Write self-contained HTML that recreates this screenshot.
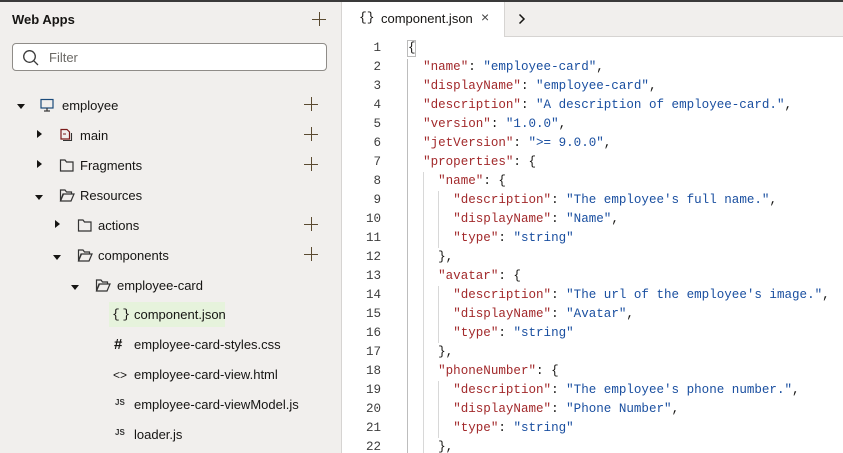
<!DOCTYPE html>
<html><head><style>
*{margin:0;padding:0;box-sizing:border-box}
body{width:843px;height:453px;overflow:hidden;background:#fff;font-family:"Liberation Sans",sans-serif;position:relative}
.topline{position:absolute;left:0;top:0;width:843px;height:2px;background:#3a3a3a}
.side{position:absolute;left:0;top:2px;width:342px;height:451px;background:#f1efed;border-right:1px solid #d6d4d2}
.title{position:absolute;left:12px;top:10px;font-weight:bold;font-size:13px;color:#161513}
.plus{position:absolute;width:14px;height:14px}
.plus:before{content:"";position:absolute;left:6.5px;top:0;width:1px;height:14px;background:#5a4a30}
.plus:after{content:"";position:absolute;left:0;top:6.5px;width:14px;height:1px;background:#5a4a30}
.filter{position:absolute;left:12px;top:41px;width:315px;height:28px;border:1px solid #8f8c88;border-radius:4px;background:#fff}
.filter span{position:absolute;left:36px;top:6px;font-size:13px;color:#6b6965}
.row{position:absolute;font-size:13px;color:#161513;height:20px;line-height:20px}
.caret{position:absolute;width:0;height:0}
.cd{border-left:4px solid transparent;border-right:4px solid transparent;border-top:5px solid #161513}
.cr{border-top:4px solid transparent;border-bottom:4px solid transparent;border-left:5px solid #161513}
.ic{position:absolute}
.tabbar{position:absolute;left:343px;top:2px;width:500px;height:35px;background:#f1efed;border-bottom:1px solid #d6d4d2}
.tab{position:absolute;left:0;top:0;width:162px;height:35px;background:#fff;border-right:1px solid #d6d4d2}
.code{position:absolute;left:343px;top:38px;width:500px;height:415px;background:#fff;overflow:hidden}
pre{font-family:"Liberation Mono",monospace;font-size:12.55px;line-height:19px;position:absolute;top:1px}
.ln{right:462px;text-align:right;color:#3d3d3d;left:0;width:38px}
.src{left:65px;color:#161513}
.k{color:#a2292b}.v{color:#1a4fa0}
.g{position:absolute;width:1px;background:#d8d8d8}
</style></head><body>
<div class="topline"></div>
<div class="side">
<div class="title" style="top:10px">Web Apps</div>
<div class="plus" style="left:312px;top:10px"></div>
<div class="filter"><svg style="position:absolute;left:9px;top:5px" width="18" height="18" viewBox="0 0 18 18"><circle cx="7.5" cy="7.5" r="5.8" fill="none" stroke="#3a3a3a" stroke-width="1.3"/><line x1="11.8" y1="11.8" x2="16" y2="16" stroke="#3a3a3a" stroke-width="1.3"/></svg><span>Filter</span></div>

<div class="caret cd" style="left:17px;top:102px"></div>
<svg class="ic" style="left:40px;top:96px" width="15" height="15" viewBox="0 0 15 15"><rect x="1" y="1.5" width="12" height="8.5" fill="none" stroke="#1b4a7a" stroke-width="1.2"/><line x1="7" y1="10" x2="7" y2="13" stroke="#333" stroke-width="1.2"/><line x1="4" y1="13" x2="10" y2="13" stroke="#333" stroke-width="1.2"/></svg>
<div class="row" style="left:62px;top:94px">employee</div>
<div class="plus" style="left:304px;top:95px"></div>

<div class="caret cr" style="left:37px;top:128px"></div>
<svg class="ic" style="left:59px;top:126px" width="15" height="15" viewBox="0 0 15 15"><path d="M2 1.5h6l2.5 2.5v7H2z" fill="none" stroke="#7a1a1a" stroke-width="1.2"/><path d="M4 12.5h8.5V5" fill="none" stroke="#333" stroke-width="1.1"/><line x1="4" y1="6" x2="7" y2="6" stroke="#7a1a1a"/></svg>
<div class="row" style="left:80px;top:124px">main</div>
<div class="plus" style="left:304px;top:125px"></div>

<div class="caret cr" style="left:37px;top:158px"></div>
<svg class="ic" style="left:59px;top:156px" width="16" height="15" viewBox="0 0 16 15"><path d="M1.5 2h4.5l1.5 2h6.5v9h-12.5z" fill="none" stroke="#333" stroke-width="1.2"/></svg>
<div class="row" style="left:80px;top:154px">Fragments</div>
<div class="plus" style="left:304px;top:155px"></div>

<div class="caret cd" style="left:35px;top:193px"></div>
<svg class="ic" style="left:59px;top:186px" width="16" height="15" viewBox="0 0 16 15"><path d="M1.5 2h4.5l1.5 2h5v2h-8l-3 7z M1.5 13l2.5-7h11l-3 7z" fill="none" stroke="#333" stroke-width="1.2"/></svg>
<div class="row" style="left:80px;top:184px">Resources</div>

<div class="caret cr" style="left:55px;top:218px"></div>
<svg class="ic" style="left:77px;top:216px" width="16" height="15" viewBox="0 0 16 15"><path d="M1.5 2h4.5l1.5 2h6.5v9h-12.5z" fill="none" stroke="#333" stroke-width="1.2"/></svg>
<div class="row" style="left:98px;top:214px">actions</div>
<div class="plus" style="left:304px;top:215px"></div>

<div class="caret cd" style="left:53px;top:253px"></div>
<svg class="ic" style="left:77px;top:246px" width="16" height="15" viewBox="0 0 16 15"><path d="M1.5 2h4.5l1.5 2h5v2h-8l-3 7z M1.5 13l2.5-7h11l-3 7z" fill="none" stroke="#333" stroke-width="1.2"/></svg>
<div class="row" style="left:98px;top:244px">components</div>
<div class="plus" style="left:304px;top:245px"></div>

<div class="caret cd" style="left:71px;top:283px"></div>
<svg class="ic" style="left:95px;top:276px" width="16" height="15" viewBox="0 0 16 15"><path d="M1.5 2h4.5l1.5 2h5v2h-8l-3 7z M1.5 13l2.5-7h11l-3 7z" fill="none" stroke="#333" stroke-width="1.2"/></svg>
<div class="row" style="left:117px;top:274px">employee-card</div>

<div style="position:absolute;left:109px;top:300px;width:116px;height:25px;background:#e6f3dc"></div>
<div class="row" style="left:112px;top:303px;font-family:'Liberation Mono',monospace;font-size:13px">{&#8201;}</div>
<div class="row" style="left:134px;top:303px">component.json</div>
<div class="row" style="left:114px;top:333px;font-size:15px;font-weight:bold">#</div>
<div class="row" style="left:134px;top:333px">employee-card-styles.css</div>
<div class="row" style="left:113px;top:363px;font-size:12px">&lt;&gt;</div>
<div class="row" style="left:134px;top:363px">employee-card-view.html</div>
<div class="row" style="left:115px;top:391px;font-size:8px;font-weight:bold;color:#333">JS</div>
<div class="row" style="left:134px;top:393px">employee-card-viewModel.js</div>
<div class="row" style="left:115px;top:421px;font-size:8px;font-weight:bold;color:#333">JS</div>
<div class="row" style="left:134px;top:423px">loader.js</div>
</div>

<div class="tabbar"><div class="tab">
<span style="position:absolute;left:16px;top:8px;font-family:'Liberation Mono',monospace;font-size:13px;color:#161513">{}</span>
<span style="position:absolute;left:38px;top:9px;font-size:13px;color:#161513">component.json</span>
<span style="position:absolute;left:138px;top:7px;font-size:14px;color:#444">×</span>
</div>
<svg style="position:absolute;left:174px;top:11px" width="10" height="12" viewBox="0 0 10 12"><path d="M2.5 1.5l4.5 4.5-4.5 4.5" fill="none" stroke="#161513" stroke-width="1.5"/></svg>
</div>

<div class="code">
<div class="g" style="left:64px;top:21px;height:400px;background:#bdbdbd"></div>
<div class="g" style="left:80px;top:134px;height:290px"></div>
<div class="g" style="left:95px;top:153px;height:57px"></div>
<div class="g" style="left:95px;top:248px;height:57px"></div>
<div class="g" style="left:95px;top:343px;height:57px"></div>
<div style="position:absolute;left:64px;top:2px;width:9px;height:17px;border:1px solid #bbb"></div>
<pre class="ln">1
2
3
4
5
6
7
8
9
10
11
12
13
14
15
16
17
18
19
20
21
22</pre>
<pre class="src">{
  <span class="k">"name"</span>: <span class="v">"employee-card"</span>,
  <span class="k">"displayName"</span>: <span class="v">"employee-card"</span>,
  <span class="k">"description"</span>: <span class="v">"A description of employee-card."</span>,
  <span class="k">"version"</span>: <span class="v">"1.0.0"</span>,
  <span class="k">"jetVersion"</span>: <span class="v">"&gt;= 9.0.0"</span>,
  <span class="k">"properties"</span>: {
    <span class="k">"name"</span>: {
      <span class="k">"description"</span>: <span class="v">"The employee's full name."</span>,
      <span class="k">"displayName"</span>: <span class="v">"Name"</span>,
      <span class="k">"type"</span>: <span class="v">"string"</span>
    },
    <span class="k">"avatar"</span>: {
      <span class="k">"description"</span>: <span class="v">"The url of the employee's image."</span>,
      <span class="k">"displayName"</span>: <span class="v">"Avatar"</span>,
      <span class="k">"type"</span>: <span class="v">"string"</span>
    },
    <span class="k">"phoneNumber"</span>: {
      <span class="k">"description"</span>: <span class="v">"The employee's phone number."</span>,
      <span class="k">"displayName"</span>: <span class="v">"Phone Number"</span>,
      <span class="k">"type"</span>: <span class="v">"string"</span>
    },</pre>
</div>
</body></html>
